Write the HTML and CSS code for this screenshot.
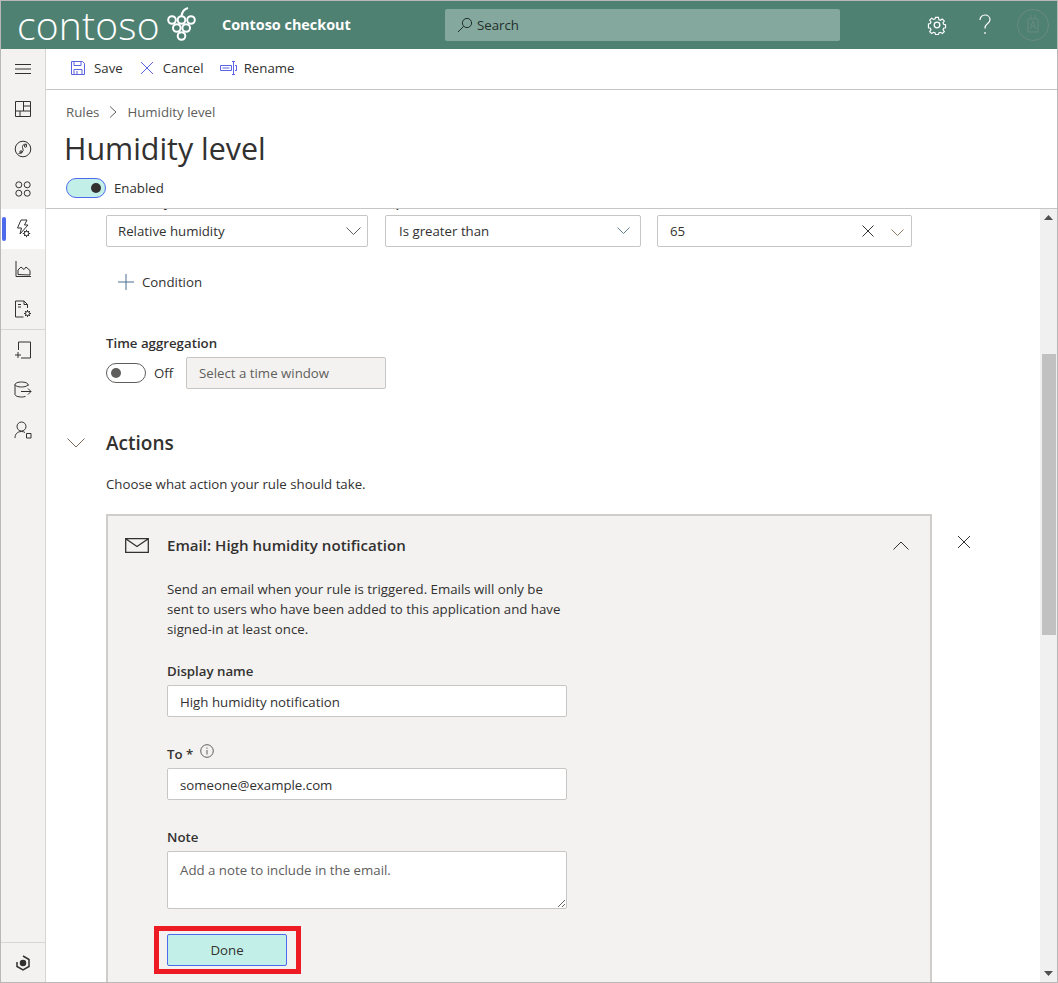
FILE: index.html
```html
<!DOCTYPE html>
<html>
<head>
    <title>Humidity level</title>
    <link rel="stylesheet" href="styles.css">
</head>
<body>

<header class="topbar">
    <div class="brand">
        <span class="brand-name">contoso</span>
        <svg class="brand-mark" width="30" height="34" viewBox="0 0 30 34" fill="none" stroke="#fff" stroke-width="2">
            <circle cx="5" cy="13" r="3.8"/><circle cx="14.500" cy="13" r="3.8"/><circle cx="24" cy="13" r="3.8"/>
            <circle cx="9.800" cy="21" r="3.8"/><circle cx="19.200" cy="21" r="3.8"/><circle cx="14.500" cy="29" r="3.8"/>
            <path d="M14.500 9C15 5 17 2 21 1"/>
        </svg>
    </div>
    <div class="app-name">Contoso checkout</div>
    <div class="search">
        <svg width="16" height="16" viewBox="0 0 16 16" fill="none" stroke="#1f2f2a" stroke-width="1"><circle cx="10" cy="6" r="4.6"/><path d="M6.6 9.4L1 15"/></svg>
        <span>Search</span>
    </div>
    <div class="top-actions">
        <div class="top-btn">
            <svg width="20" height="20" viewBox="0 0 20 20" fill="none" stroke="#fff" stroke-width="1.300"><circle cx="10" cy="10" r="2.8"/><path d="M8.4 1.5h3.2l.5 2.5 1.7.7 2.1-1.4 2.2 2.2-1.4 2.1.7 1.7 2.1.5v3.2l-2.1.5-.7 1.7 1.4 2.1-2.2 2.2-2.1-1.4-1.7.7-.5 1.9H8.4l-.5-1.9-1.7-.7-2.1 1.4-2.2-2.2 1.4-2.1-.7-1.7-2.1-.5V8.9l2.1-.5.7-1.7-1.4-2.1 2.2-2.2 2.1 1.4 1.7-.7z" transform="translate(1 1) scale(.9)"/></svg>
        </div>
        <div class="top-btn">
            <svg width="14" height="22" viewBox="0 0 14 22" fill="none" stroke="#fff" stroke-width="1.2"><path d="M2 6c0-3 2.2-5 5-5s5 2 5 4.6c0 2-1 3-2.6 4.2C7.800 11 7 12 7 14.500"/><path d="M7 18v2"/></svg>
        </div>
        <div class="top-btn">
            <svg width="32" height="32" viewBox="0 0 32 32" fill="none" stroke="#688a80" stroke-width="1"><circle cx="16" cy="16" r="15.500"/><path d="M11 10h10v13H11zM14 10V6M18 10V6M13 20l3-8 3 8M14.200 17h3.600"/></svg>
        </div>
    </div>
</header>

<div class="workspace">
    <aside class="sidebar">
        <div class="nav-group">
            <div class="nav-item">
                <svg width="18" height="12" viewBox="0 0 18 12" fill="none" stroke="#323130"><path d="M1 1.500h16M1 6h16M1 10.500h16"/></svg>
            </div>
            <div class="nav-item">
                <svg width="18" height="18" viewBox="0 0 18 18" fill="none" stroke="#323130"><path d="M1.500 1.500h15v15h-15zM9.500 1.500v9.500M9.500 6h7M1.500 11h15M6 11v5.500"/></svg>
            </div>
            <div class="nav-item">
                <svg width="18" height="18" viewBox="0 0 18 18" fill="none" stroke="#323130"><circle cx="9" cy="9" r="7.800"/><path d="M13 4.500c-2.500-1-5 .5-4.500 3s1.500 3-.5 4.500-2.500 1.500-3.500 1.500"/><circle cx="11.500" cy="6" r="1.200"/><circle cx="7" cy="12" r="1.200"/></svg>
            </div>
            <div class="nav-item">
                <svg width="18" height="18" viewBox="0 0 18 18" fill="none" stroke="#323130"><circle cx="4.800" cy="4.800" r="3"/><circle cx="13.200" cy="4.800" r="3"/><circle cx="4.800" cy="13.200" r="3"/><circle cx="13.200" cy="13.200" r="3"/></svg>
            </div>
            <div class="nav-item active">
                <svg width="18" height="20" viewBox="0 0 18 20" fill="none" stroke="#323130"><path d="M7 1h6l-2.500 5H14L6 15l1.500-6H3.500z"/><circle cx="12.500" cy="14.500" r="2.200"/><path d="M12.500 10.800v1.500M12.500 16.700v1.500M8.800 14.500h1.500M14.700 14.500h1.500M10 12l1 1M14 16l1 1M15 12l-1 1M11 16l-1 1"/></svg>
            </div>
            <div class="nav-item">
                <svg width="16" height="16" viewBox="0 0 16 16" fill="none" stroke="#323130"><path d="M1 0v15.500h15"/><path d="M3 13.500V9l3-3 3 2.500 2-2.500 4 3.500v4.500z"/></svg>
            </div>
            <div class="nav-item">
                <svg width="18" height="18" viewBox="0 0 18 18" fill="none" stroke="#323130"><path d="M9.500 17H1.500V1H10l3.500 3.500V8M10 1v3.500h3.500M4 4.500h3M4 7h3"/><circle cx="13.500" cy="13.500" r="2"/><path d="M13.500 10v1.500M13.500 15.500V17M10 13.500h1.500M15.500 13.500H17M11 11l1 1M15 15l1 1M16 11l-1 1M12 15l-1 1"/></svg>
            </div>
        </div>
        <div class="nav-group">
            <div class="nav-item">
                <svg width="18" height="18" viewBox="0 0 18 18" fill="none" stroke="#323130"><path d="M4.500 9V1h12v16H7M1 14h6M4 11v6"/></svg>
            </div>
            <div class="nav-item">
                <svg width="18" height="18" viewBox="0 0 18 18" fill="none" stroke="#323130"><path d="M14 5V3.500C14 2.200 11 1 7.500 1S1 2.200 1 3.500v10C1 14.800 4 16 7.500 16c1.500 0 3-.2 4-.6M1 3.500C1 4.800 4 6 7.500 6S14 4.800 14 3.500M7 10.500h10M14 7.500l3 3-3 3"/></svg>
            </div>
            <div class="nav-item">
                <svg width="18" height="18" viewBox="0 0 18 18" fill="none" stroke="#323130"><circle cx="7.500" cy="5.500" r="4.500"/><path d="M1 17c0-4 2.500-6.500 6.500-6.500 1.500 0 2.500.3 3.500 1"/><path d="M12.500 12.500h4.500v4.500h-4.500z"/></svg>
            </div>
        </div>
        <div class="nav-bottom">
            <svg width="16" height="16" viewBox="0 0 16 16" fill="none" stroke="#323130" stroke-width="1.500"><path d="M8 1l6 3.500v7L8 15l-6-3.500V7"/><circle cx="8" cy="8" r="2.500" fill="#323130"/></svg>
        </div>
    </aside>

    <main class="main">
        <div class="commandbar">
            <div class="cmd">
                <svg width="14" height="14" viewBox="0 0 14 14" fill="none" stroke="#5b63e0"><path d="M.5.500h11l2 2v11H.5zM3 .500v4h7v-4M3 13.500V8.500h8v5M6 10v3.500"/></svg>
                <span>Save</span>
            </div>
            <div class="cmd">
                <svg width="14" height="14" viewBox="0 0 14 14" fill="none" stroke="#5b63e0"><path d="M1 1l12 12M13 1L1 13"/></svg>
                <span>Cancel</span>
            </div>
            <div class="cmd cmd-rename">
                <svg width="17" height="14" viewBox="0 0 17 14" fill="none" stroke="#5b63e0"><path d="M.5 4.500h11v5H.5zM2.500 7h7" /><path d="M12 .5h3M12 13.500h3M13.500.5v13M15 4.500h1.500v5H15"/></svg>
                <span>Rename</span>
            </div>
        </div>

        <div class="page-head">
            <div class="breadcrumb">
                <span>Rules</span>
                <svg width="8" height="12" viewBox="0 0 8 12" fill="none" stroke="#605e5c"><path d="M1 .5L7 6l-6 5.500"/></svg>
                <span>Humidity level</span>
            </div>
            <h1>Humidity level</h1>
            <div class="toggle-row">
                <span class="toggle on"></span>
                <span>Enabled</span>
            </div>
        </div>

        <div class="scroll-area">
            <div class="content">
                <div class="filter-row">
                    <div>
                        <label class="field-label">Telemetry</label>
                        <div class="select select-first">
                            <span>Relative humidity</span>
                            <svg class="chev" width="15" height="8" viewBox="0 0 15 8" fill="none" stroke="#605e5c"><path d="M.5.500L7.500 7.500 14.500.5"/></svg>
                        </div>
                    </div>
                    <div>
                        <label class="field-label">Operator</label>
                        <div class="select select-op">
                            <span>Is greater than</span>
                            <svg class="chev chev-op" width="13" height="8" viewBox="0 0 13 8" fill="none" stroke="#5f7f8f"><path d="M.5.500L6.500 6.500 12.500.5"/></svg>
                        </div>
                    </div>
                    <div>
                        <label class="field-label">Value</label>
                        <div class="select">
                            <span>65</span>
                            <svg class="clear" width="12" height="12" viewBox="0 0 12 12" fill="none" stroke="#323130"><path d="M.5.500l11 11M11.500.5l-11 11"/></svg>
                            <svg class="chev-small" width="13" height="8" viewBox="0 0 13 8" fill="none" stroke="#8a7a5f"><path d="M.5.500L6.500 6.500 12.500.5"/></svg>
                        </div>
                    </div>
                </div>

                <div class="add-condition">
                    <svg width="16" height="16" viewBox="0 0 16 16" fill="none" stroke="#4a6f8f"><path d="M0 8h16M8 0v16"/></svg>
                    <span>Condition</span>
                </div>

                <label class="field-label time-label">Time aggregation</label>
                <div class="time-row">
                    <span class="toggle off"></span>
                    <span class="off-text">Off</span>
                    <div class="time-window">Select a time window</div>
                </div>

                <div class="section-head">
                    <svg width="18" height="10" viewBox="0 0 18 10" fill="none" stroke="#7a6a5a"><path d="M.5.500L9 9 17.500.5"/></svg>
                    <h2>Actions</h2>
                </div>
                <p class="section-text">Choose what action your rule should take.</p>

                <div class="action-row">
                    <div class="card">
                        <div class="card-head">
                            <svg width="24" height="15" viewBox="0 0 24 15" fill="none" stroke="#323130" stroke-width="1.300"><path d="M.7.700h22.600v13.600H.7zM.7.700L12 8.500 23.300.7"/></svg>
                            <h3>Email: High humidity notification</h3>
                            <svg class="card-toggle" width="16" height="9" viewBox="0 0 16 9" fill="none" stroke="#323130"><path d="M.5 8.500L8 1l7.500 7.500"/></svg>
                        </div>
                        <div class="card-body">
                            <p class="card-text">Send an email when your rule is triggered. Emails will only be sent to users who have been added to this application and have signed-in at least once.</p>

                            <label class="field-label">Display name</label>
                            <input class="text-input" type="text" value="High humidity notification">

                            <label class="field-label spaced">To * <svg class="info" width="14" height="14" viewBox="0 0 14 14" fill="none" stroke="#605e5c"><circle cx="7" cy="7" r="6.300"/><path d="M7 6v4.500M7 3.500v1.200"/></svg></label>
                            <input class="text-input" type="text" value="someone@example.com">

                            <label class="field-label spaced">Note</label>
                            <textarea class="text-area" placeholder="Add a note to include in the email."></textarea>

                            <div class="done-wrap">
                                <button class="done-btn" type="button">Done</button>
                            </div>
                        </div>
                    </div>
                    <svg class="action-remove" width="14" height="14" viewBox="0 0 14 14" fill="none" stroke="#323130"><path d="M1 1l12 12M13 1L1 13"/></svg>
                </div>
            </div>

            <div class="scrollbar">
                <svg width="9" height="5" viewBox="0 0 9 5" fill="#505050"><path d="M4.500 0L9 5H0z"/></svg>
                <div class="thumb"></div>
                <svg class="arrow-down" width="9" height="5" viewBox="0 0 9 5" fill="#505050"><path d="M0 0h9L4.500 5z"/></svg>
            </div>
        </div>
    </main>
</div>

</body>
</html>
```

FILE: styles.css
```css
* {
    box-sizing: border-box;
    margin: 0;
    padding: 0;
}
html, body {
    height: 100%;
    overflow: hidden;
}
body {
    font-family: 'Open Sans', 'Noto Sans', sans-serif;
    font-size: 13.25px;
    line-height: 20px;
    color: #323130;
    background-color: #fff;
    display: flex;
    flex-direction: column;
    border: 1px solid #b8b8b8;
}

/* top bar */
.topbar {
    height: 48px;
    flex: none;
    display: flex;
    align-items: center;
    background-color: #4f8172;
    color: #fff;
}
.brand {
    width: 221px;
    padding-left: 16px;
    display: flex;
    align-items: center;
}
.brand-name {
    font-family: 'Open Sans', sans-serif;
    font-size: 39px;
    font-weight: 300;
    line-height: 48px;
    width: 150px;
    letter-spacing: 0.2px;
}
.brand-mark {
    margin-top: -2px;
}
.app-name {
    width: 223px;
    font-size: 14.4px;
    font-weight: 700;
}
.search {
    width: 395px;
    height: 32px;
    display: flex;
    align-items: center;
    gap: 4px;
    padding-left: 12px;
    background-color: #84a89d;
    border-radius: 2px;
    color: #1f2f2a;
}
.top-actions {
    margin-left: auto;
    display: flex;
}
.top-btn {
    width: 48px;
    height: 48px;
    display: flex;
    align-items: center;
    justify-content: center;
}

/* left nav */
.workspace {
    flex: 1;
    min-height: 0;
    display: flex;
}
.sidebar {
    width: 45px;
    flex: none;
    display: flex;
    flex-direction: column;
    background-color: #f3f2f1;
    border-right: 1px solid #d8d6d4;
}
.nav-group + .nav-group {
    border-top: 1px solid #d8d6d4;
}
.nav-item {
    position: relative;
    height: 40px;
    display: flex;
    align-items: center;
    justify-content: center;
}
.nav-item.active {
    background-color: #fff;
}
.nav-item.active::before {
    content: "";
    position: absolute;
    left: 1px;
    top: 8px;
    width: 4px;
    height: 24px;
    border-radius: 2px;
    background-color: #4f6bed;
}
.nav-bottom {
    margin-top: auto;
    height: 40px;
    display: flex;
    align-items: center;
    justify-content: center;
    border-top: 1px solid #d8d6d4;
}

/* main column */
.main {
    flex: 1;
    min-width: 0;
    display: flex;
    flex-direction: column;
}
.commandbar {
    height: 41px;
    flex: none;
    display: flex;
    align-items: center;
    padding: 0 0 2px 25px;
    gap: 17px;
    border-bottom: 1px solid #c8c6c4;
}
.cmd {
    display: flex;
    align-items: center;
    gap: 9px;
}
.cmd-rename {
    gap: 7px;
    margin-left: -1px;
}
.page-head {
    height: 119px;
    flex: none;
    padding: 12px 0 0 20px;
    border-bottom: 1px solid #c8c6c4;
}
.breadcrumb {
    display: flex;
    align-items: center;
    gap: 10px;
    color: #605e5c;
}
h1 {
    font-size: 30.4px;
    font-weight: 400;
    line-height: 42px;
    margin-top: 6px;
    margin-bottom: 8px;
    margin-left: -2px;
}
.toggle-row {
    display: flex;
    align-items: center;
    gap: 8px;
}
.toggle {
    position: relative;
    width: 40px;
    height: 20px;
    flex: none;
    border-radius: 10px;
}
.toggle::after {
    content: "";
    position: absolute;
    top: 4px;
    width: 10px;
    height: 10px;
    border-radius: 50%;
}
.toggle.on {
    background-color: #c2f0e8;
    border: 1px solid #4f6bed;
}
.toggle.on::after {
    right: 4px;
    background-color: #323130;
}
.toggle.off {
    background-color: #fff;
    border: 1px solid #605e5c;
}
.toggle.off::after {
    left: 4px;
    background-color: #605e5c;
}

/* scrolled form */
.scroll-area {
    flex: 1;
    min-height: 0;
    display: flex;
}
.content {
    flex: 1;
    min-width: 0;
    overflow: hidden;
    padding-left: 60px;
}
.scrollbar {
    width: 17px;
    flex: none;
    display: flex;
    flex-direction: column;
    align-items: center;
    padding-top: 6px;
    background-color: #f0f0f0;
}
.thumb {
    width: 14px;
    height: 281px;
    margin-top: 134px;
    background-color: #c1c1c1;
}
.arrow-down {
    margin-top: auto;
    margin-bottom: 6px;
}
.field-label {
    display: block;
    font-weight: 600;
    height: 20px;
}
.filter-row {
    display: grid;
    grid-template-columns: 279px 272px 255px;
    margin-top: -17px;
}
.select {
    width: 255px;
    height: 32px;
    margin-top: 3px;
    display: flex;
    align-items: center;
    padding-left: 12px;
    background-color: #fff;
    border: 1px solid #c8c6c4;
    border-radius: 2px;
}
.select-first {
    width: 262px;
    padding-left: 11px;
}
.select-op {
    width: 256px;
    padding-left: 13px;
}
.chev {
    margin-left: auto;
    margin-right: 6px;
}
.chev-op {
    margin-right: 10px;
}
.clear {
    margin-left: auto;
    margin-right: 17px;
}
.chev-small {
    margin-right: 7px;
    margin-top: 3px;
}
.add-condition {
    height: 32px;
    margin-top: 19px;
    padding-left: 12px;
    display: flex;
    align-items: center;
    gap: 8px;
}
.time-label {
    margin-top: 35px;
}
.time-row {
    display: flex;
    align-items: center;
    margin-top: 4px;
}
.off-text {
    margin-left: 8px;
    width: 32px;
}
.time-window {
    width: 200px;
    height: 32px;
    padding-left: 12px;
    line-height: 30px;
    color: #605e5c;
    background-color: #f3f2f1;
    border: 1px solid #c8c6c4;
    border-radius: 2px;
}
.section-head {
    display: flex;
    align-items: center;
    gap: 21px;
    margin-top: 40px;
    margin-left: -39px;
    height: 28px;
}
h2 {
    font-size: 19px;
    font-weight: 600;
    line-height: 28px;
}
.section-text {
    margin-top: 17px;
}
.action-row {
    display: flex;
    align-items: flex-start;
    margin-top: 20px;
}
.card {
    width: 826px;
    flex: none;
    padding-bottom: 40px;
    background-color: #f3f2f1;
    border: 2px solid #cfcdcb;
}
.card-head {
    height: 32px;
    margin-top: 13px;
    display: flex;
    align-items: center;
    padding-left: 17px;
}
h3 {
    font-size: 15.1px;
    font-weight: 600;
    margin-left: 18px;
}
.card-toggle {
    margin-left: auto;
    margin-right: 21px;
}
.card-body {
    padding: 18px 0 0 59px;
}
.card-text {
    width: 400px;
    margin-bottom: 22px;
}
.text-input,
.text-area {
    display: block;
    width: 400px;
    margin-top: 4px;
    padding: 0 12px;
    font: inherit;
    color: #323130;
    background-color: #fff;
    border: 1px solid #c8c6c4;
    border-radius: 2px;
    outline: none;
}
.text-input {
    height: 32px;
    padding-top: 2px;
}
.text-area {
    height: 58px;
    padding-top: 8px;
}
.text-area::placeholder {
    color: #605e5c;
}
.spaced {
    margin-top: 27px;
}
.info {
    margin-left: 3px;
    vertical-align: 1px;
}
.done-wrap {
    position: relative;
    width: 120px;
    margin-top: 25px;
}
/* red highlight drawn over the screenshot */
.done-wrap::after {
    content: "";
    position: absolute;
    inset: -8px -14px -8px -13px;
    border: 5px solid #ed1c24;
}
.done-btn {
    display: block;
    width: 120px;
    height: 32px;
    font: inherit;
    color: #323130;
    background-color: #c2f0e8;
    border: 1px solid #4f6bed;
    border-radius: 2px;
}
.action-remove {
    margin-left: 25px;
    margin-top: 21px;
}
```
